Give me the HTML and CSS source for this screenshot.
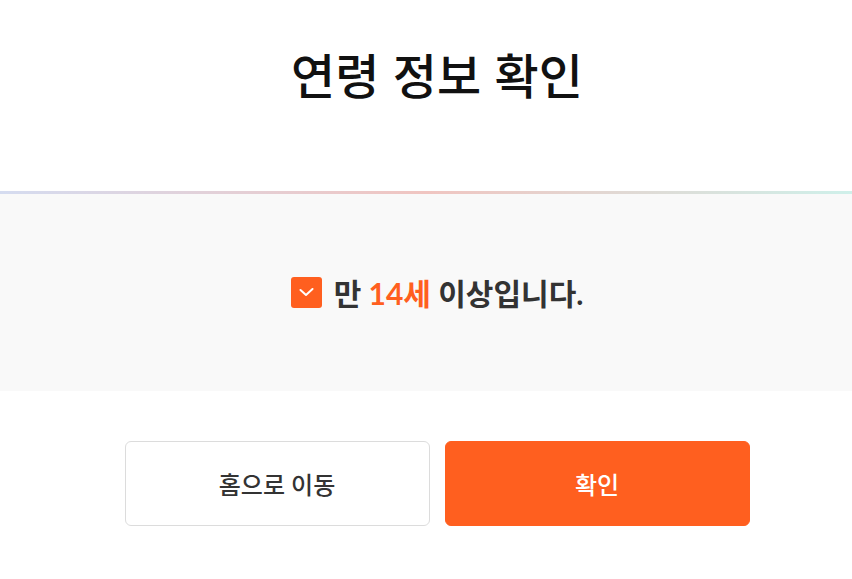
FILE: index.html
```html
<!DOCTYPE html>
<html lang="ko">
<head>
    <meta charset="UTF-8">
    <meta name="viewport" content="width=device-width, initial-scale=1.0">
    <title>연령 정보 확인</title>
    <link rel="stylesheet" href="styles.css">
</head>
<body>
    <header class="page-head">
        <h1>연령 정보 확인</h1>
    </header>

    <div class="divider"></div>

    <section class="age-box">
        <label class="age-check">
            <span class="check-mark">
                <svg width="15" height="9" viewBox="0 0 15 9">
                    <path d="M1.5 2 L7 7 L13.5 1" fill="none" stroke="#fff" stroke-width="2" stroke-linecap="round" stroke-linejoin="round"/>
                </svg>
            </span>
            <span class="age-text">만 <em>14세</em> 이상입니다.</span>
        </label>
    </section>

    <div class="actions">
        <button type="button" class="btn btn-home">홈으로 이동</button>
        <button type="button" class="btn btn-ok">확인</button>
    </div>
</body>
</html>
```

FILE: styles.css
```css
body {
    margin: 0;
    padding: 0;
    background: #fff;
    color: #333;
    font-family: Lato, "Noto Sans CJK KR", sans-serif;
}

.page-head {
    height: 191px;
    padding-left: 22px;
    box-sizing: border-box;
    text-align: center;
}

.page-head h1 {
    margin: 0;
    padding-top: 40px;
    font-family: "Noto Sans CJK KR", sans-serif;
    font-size: 48px;
    font-weight: 500;
    line-height: 66px;
    color: #111;
}

.divider {
    height: 3px;
    background: linear-gradient(90deg, #d5dcf0 0%, #f0c5c1 50%, #cff0ea 100%);
}

.age-box {
    height: 197px;
    background: #f9f9f9;
    padding-left: 22px;
    display: flex;
    align-items: center;
    justify-content: center;
}

.age-check {
    display: flex;
    align-items: center;
    gap: 12px;
    cursor: pointer;
}

.check-mark {
    width: 31px;
    height: 31px;
    border-radius: 3px;
    background: #ff5f1f;
    display: flex;
    align-items: center;
    justify-content: center;
}

.age-text {
    font-size: 30px;
    font-weight: 700;
    color: #333;
    line-height: 40px;
}

.age-text em {
    font-style: normal;
    color: #ff5f1f;
}

.actions {
    display: flex;
    justify-content: center;
    gap: 15px;
    padding: 50px 0 0 22px;
}

.btn {
    width: 305px;
    height: 85px;
    border-radius: 6px;
    font-family: Lato, "Noto Sans CJK KR", sans-serif;
    font-size: 24px;
    font-weight: 500;
    cursor: pointer;
}

.btn-home {
    background: #fff;
    border: 1px solid #dcdcdc;
    color: #333;
}

.btn-ok {
    background: #ff5f1f;
    border: 1px solid #ff5f1f;
    color: #fff;
}
```
